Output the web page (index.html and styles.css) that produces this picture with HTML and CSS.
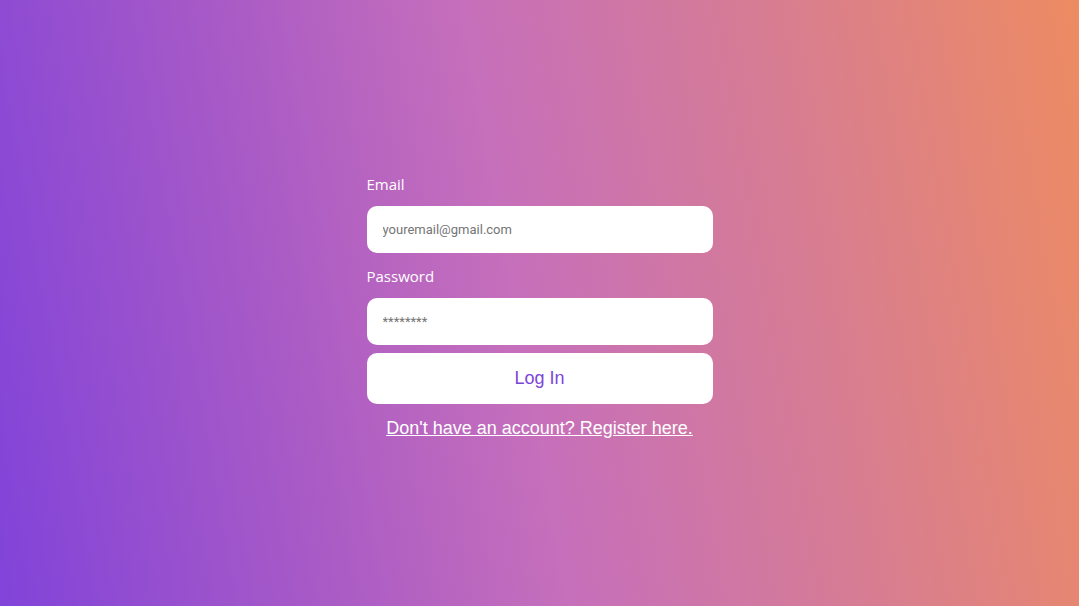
FILE: index.html
```html
<!DOCTYPE html>
<html>
<head>
<meta charset="utf-8">
<link rel="stylesheet" href="styles.css">
</head>
<body>
<main class="page">
  <form class="login">
    <label class="label" for="email">Email</label>
    <input class="field" id="email" type="text" placeholder="youremail@gmail.com">
    <label class="label label-pw" for="pw">Password</label>
    <input class="field" id="pw" type="text" placeholder="********">
    <button class="btn" type="button">Log In</button>
    <a class="link" href="#">Don't have an account? Register here.</a>
  </form>
</main>
</body>
</html>
```
FILE: styles.css
```css
html, body {
  margin: 0;
  padding: 0;
  height: 100%;
}
body {
  background: linear-gradient(80deg, #8143d9 0%, #a85ac6 27%, #c66fbb 48%, #d67c95 72%, #ed8b62 100%);
}
.page {
  height: 100%;
  display: flex;
  align-items: center;
  justify-content: center;
}
.login {
  width: 346px;
  display: flex;
  flex-direction: column;
  margin-top: 6px;
}
.label {
  font-family: "Open Sans", sans-serif;
  font-size: 15px;
  line-height: 20px;
  color: #fff;
  margin-bottom: 12px;
}
.label-pw {
  margin-top: 13px;
}
.field {
  box-sizing: border-box;
  height: 47px;
  border: none;
  border-radius: 10px;
  background: #fff;
  padding: 0 16px;
  font-family: Roboto, sans-serif;
  font-size: 13px;
  outline: none;
}
.field::placeholder {
  color: #757575;
}
.btn {
  margin-top: 8px;
  height: 51px;
  border: none;
  border-radius: 10px;
  background: #fff;
  color: #7b45d8;
  font-family: "Liberation Sans", Arial, sans-serif;
  font-size: 18px;
  cursor: pointer;
}
.link {
  margin-top: 14px;
  text-align: center;
  color: #fff;
  font-family: "Liberation Sans", Arial, sans-serif;
  font-size: 18px;
  line-height: 21px;
  text-decoration: underline;
}
```
